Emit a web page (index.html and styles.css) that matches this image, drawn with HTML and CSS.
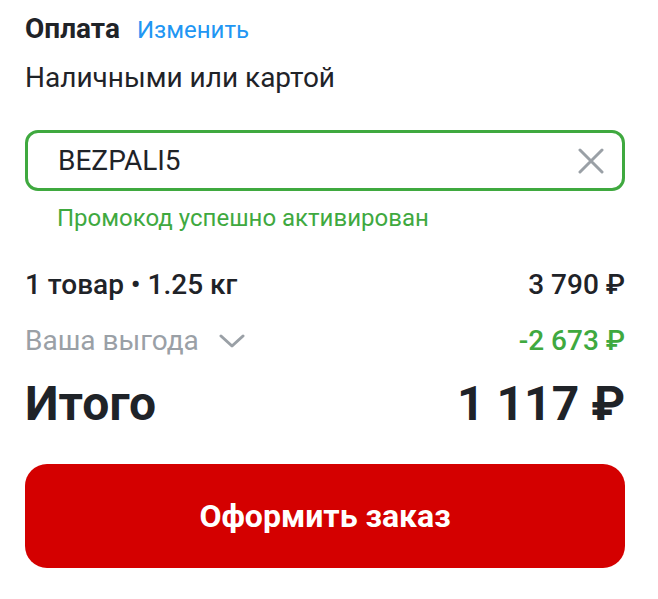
FILE: index.html
```html
<!DOCTYPE html>
<html lang="ru">
<head>
  <meta charset="UTF-8">
  <title>Оформление заказа</title>
  <meta name="viewport" content="width=device-width, initial-scale=1.0">
  <link rel="stylesheet" href="styles.css">
</head>
<body>
  <div class="checkout">
    <div class="payment-head">
      <span class="payment-title">Оплата</span>
      <a href="#" class="payment-change">Изменить</a>
    </div>
    <div class="payment-method">Наличными или картой</div>

    <div class="promo-field">
      <input type="text" class="promo-input" value="BEZPALI5">
      <button type="button" class="promo-clear" aria-label="Очистить">
        <svg width="26" height="26" viewBox="0 0 26 26">
          <path d="M2 2 L24 24 M24 2 L2 24" stroke="#9aa0a6" stroke-width="3" stroke-linecap="round" fill="none"/>
        </svg>
      </button>
    </div>
    <div class="promo-status">Промокод успешно активирован</div>

    <div class="summary-row">
      <span class="summary-items">1 товар • 1.25 кг</span>
      <span class="summary-price">3 790 ₽</span>
    </div>
    <div class="summary-row summary-row-benefit">
      <span class="summary-benefit">Ваша выгода
        <svg width="26" height="14" viewBox="0 0 26 14">
          <path d="M2 2 L13 12 L24 2" stroke="#9aa0a6" stroke-width="3" stroke-linecap="round" stroke-linejoin="round" fill="none"/>
        </svg>
      </span>
      <span class="summary-discount">-2 673 ₽</span>
    </div>
    <div class="total-row">
      <span>Итого</span>
      <span>1 117 ₽</span>
    </div>

    <button type="button" class="order-btn">Оформить заказ</button>
  </div>
</body>
</html>
```

FILE: styles.css
```css
* {
  margin: 0;
  padding: 0;
  box-sizing: border-box;
}

body {
  font-family: Roboto, 'Noto Sans', sans-serif;
  color: #1f2328;
  background: #fff;
}

.checkout {
  width: 600px;
  margin-left: 25px;
  padding-top: 13px;
}

.payment-head {
  display: flex;
  align-items: baseline;
  gap: 17px;
  line-height: 32px;
}

.payment-title {
  font-size: 28px;
  font-weight: 700;
}

.payment-change {
  font-size: 24px;
  color: #2196f3;
  text-decoration: none;
}

.payment-method {
  margin-top: 15px;
  font-size: 28px;
  line-height: 34px;
}

.promo-field {
  margin-top: 35px;
  height: 61px;
  border: 3px solid #3fa93f;
  border-radius: 13px;
  display: flex;
  align-items: center;
  padding: 0 18px 0 30px;
}

.promo-input {
  flex: 1;
  border: none;
  outline: none;
  font-family: inherit;
  font-size: 28px;
  color: #1f2328;
  background: transparent;
}

.promo-clear {
  border: none;
  background: none;
  display: flex;
  cursor: pointer;
}

.promo-status {
  margin-top: 12px;
  padding-left: 32px;
  font-size: 24px;
  line-height: 30px;
  color: #3fa93f;
}

.summary-row {
  display: flex;
  justify-content: space-between;
  align-items: center;
  font-size: 28px;
  line-height: 34px;
  margin-top: 35px;
}

.summary-row-benefit {
  margin-top: 22px;
}

.summary-items,
.summary-price {
  font-weight: 500;
}

.summary-benefit {
  display: flex;
  align-items: center;
  gap: 20px;
  color: #9aa0a6;
}

.summary-discount {
  color: #3fa93f;
  font-weight: 500;
}

.total-row {
  display: flex;
  justify-content: space-between;
  font-size: 48px;
  line-height: 56px;
  font-weight: 700;
  margin-top: 18px;
}

.order-btn {
  display: block;
  width: 100%;
  height: 104px;
  margin-top: 32px;
  border: none;
  border-radius: 22px;
  background: #d40000;
  color: #fff;
  font-family: inherit;
  font-size: 32px;
  font-weight: 700;
  cursor: pointer;
}
```
